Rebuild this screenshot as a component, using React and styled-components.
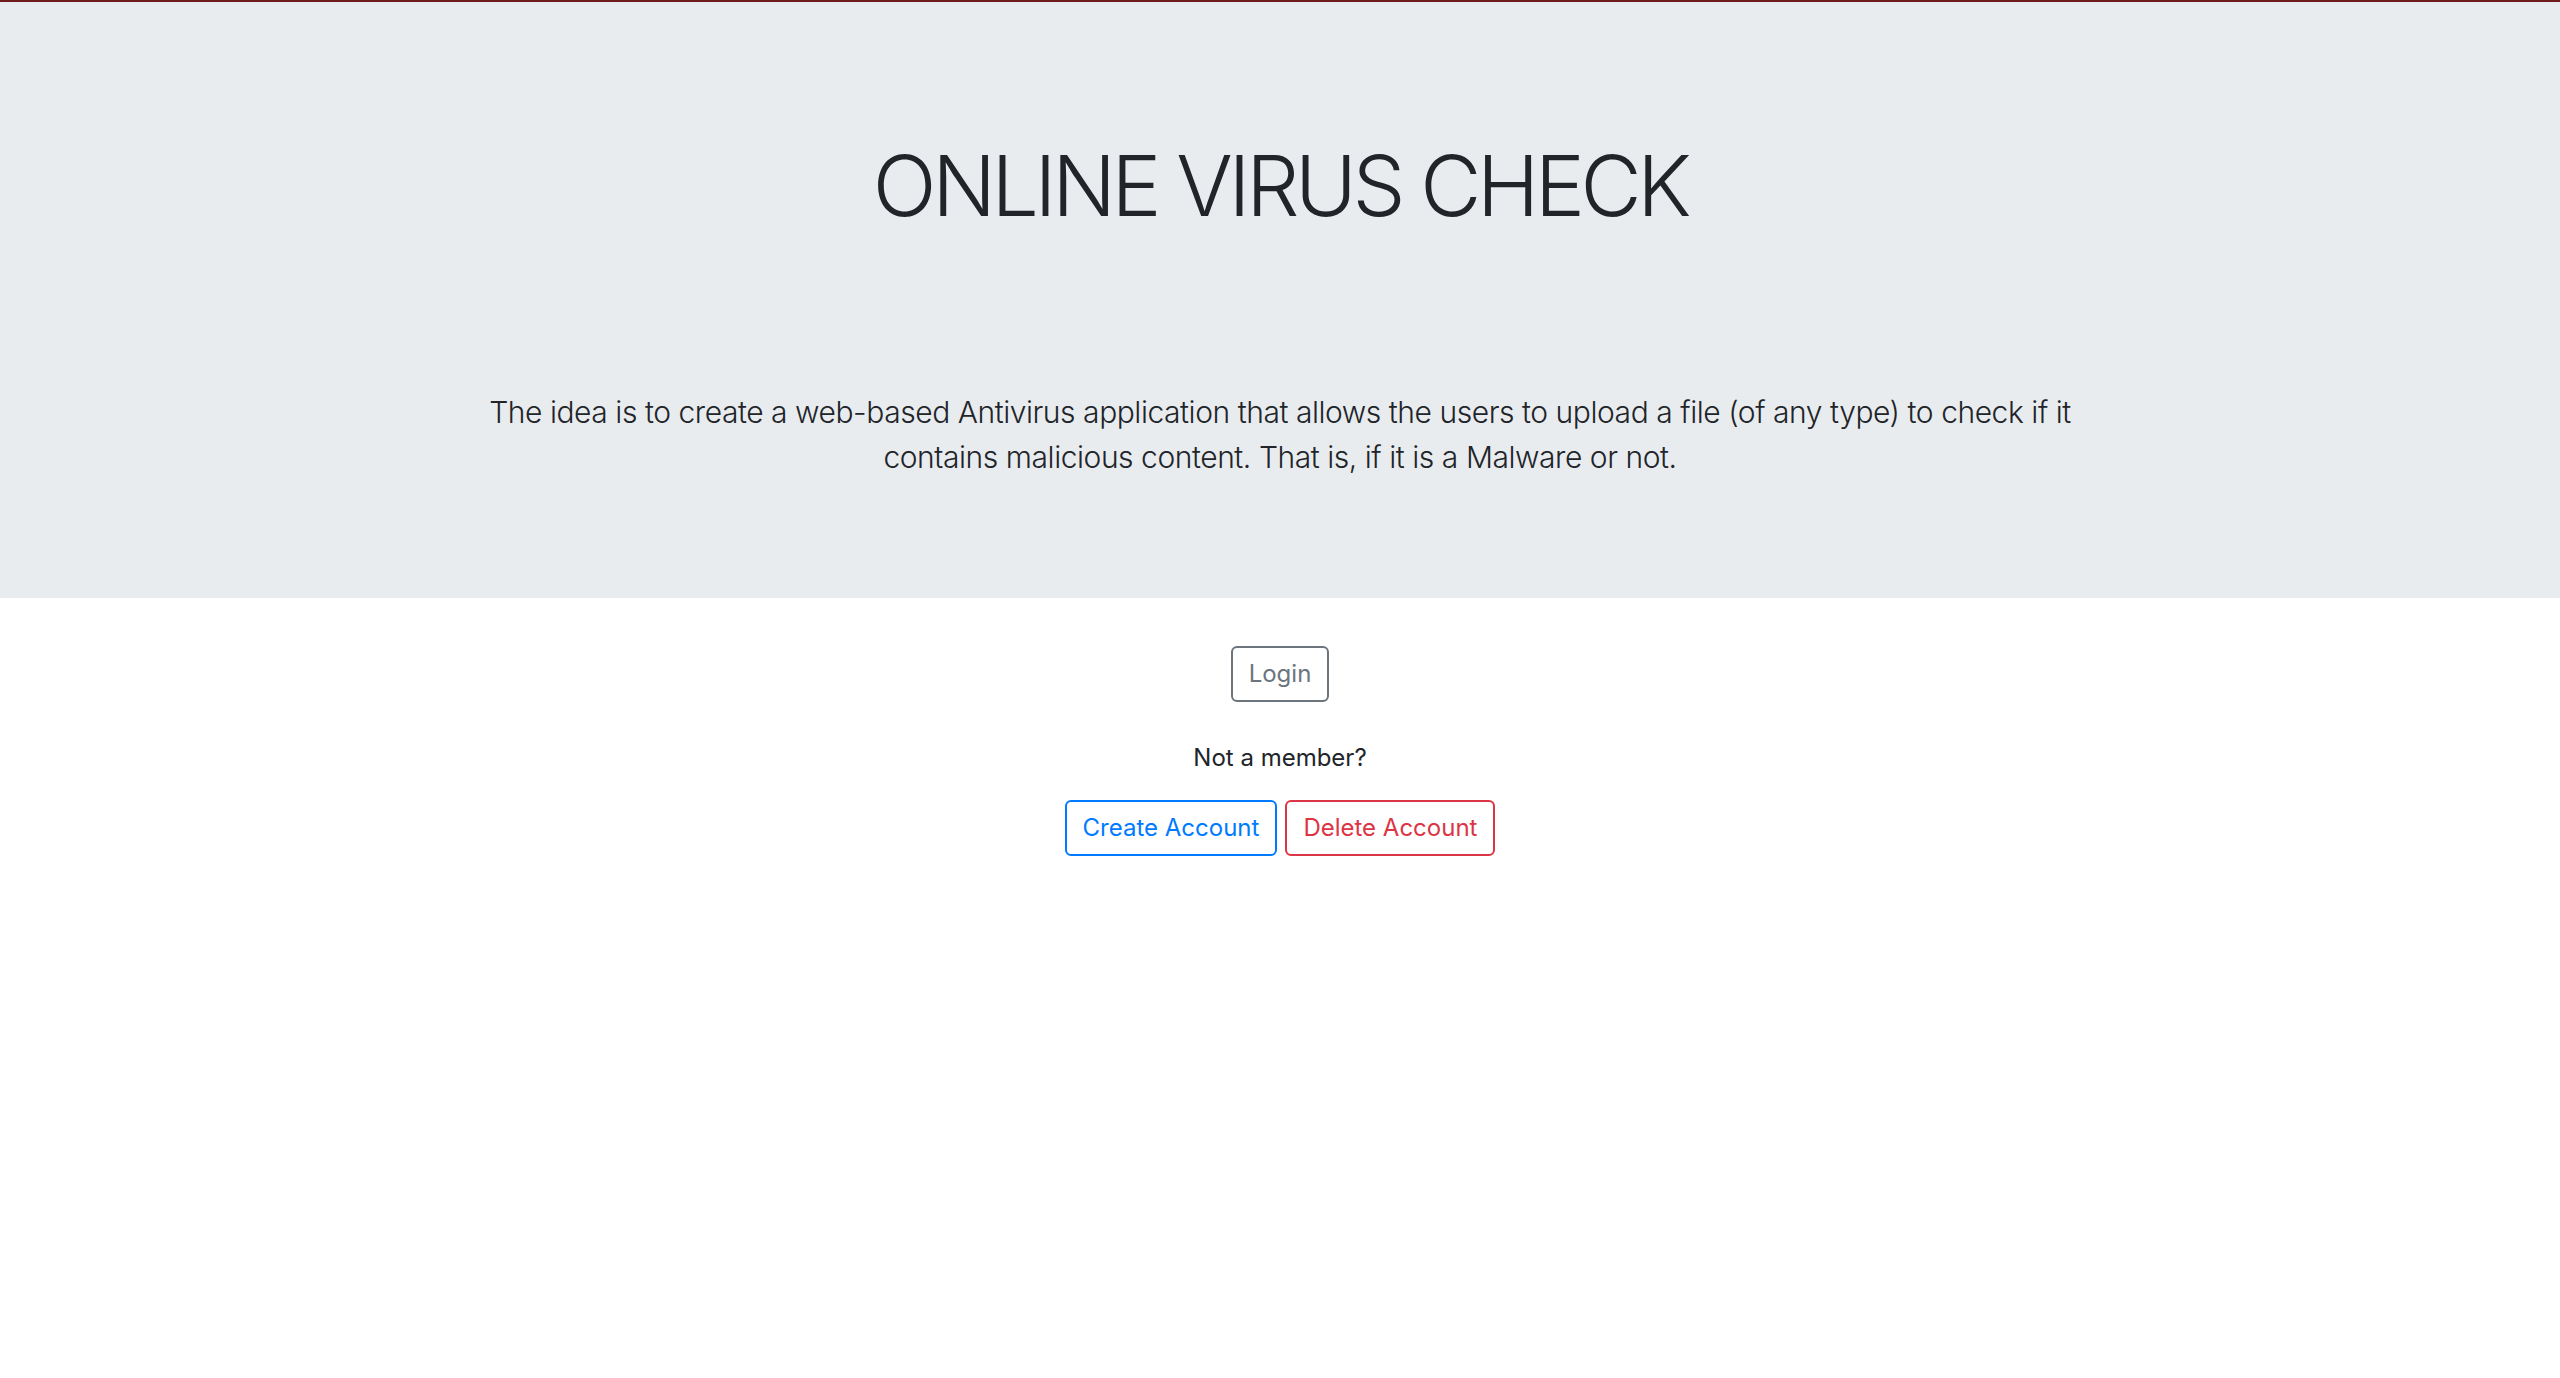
import React from 'react';
import styled, { createGlobalStyle } from 'styled-components';

const GlobalStyle = createGlobalStyle`
  html, body {
    margin: 0;
    padding: 0;
    background: #ffffff;
  }

  body {
    font-family: Inter, "Noto Sans", "Liberation Sans", sans-serif;
    color: #212529;
    border-top: 2px solid #6e1b1b;
  }
`;

const Jumbotron = styled.header`
  background: #e9ecef;
  padding: 134px 24px 118px;
  display: flex;
  flex-direction: column;
  align-items: center;
  text-align: center;
`;

const Title = styled.h1`
  margin: 0;
  font-size: 84px;
  font-weight: 300;
  line-height: 1.2;
  letter-spacing: -4.4px;
  color: #212529;
`;

const Lead = styled.p`
  margin: 153px 0 0;
  max-width: 1665px;
  font-size: 30px;
  font-weight: 300;
  line-height: 1.5;
  letter-spacing: -0.45px;
`;

const Main = styled.main`
  display: flex;
  flex-direction: column;
  align-items: center;
  padding-top: 48px;
`;

const Row = styled.div`
  display: flex;
  gap: 8px;
`;

const tones = {
  secondary: '#6c757d',
  primary: '#007bff',
  danger: '#dc3545',
};

const OutlineButton = styled.button`
  font-family: inherit;
  font-size: 24px;
  line-height: 36px;
  padding: 8px 16px;
  background: transparent;
  border: 2px solid ${props => tones[props.tone]};
  color: ${props => tones[props.tone]};
  border-radius: 6px;
  cursor: pointer;
`;

const Prompt = styled.p`
  margin: 38px 0 24px;
  font-size: 24px;
  line-height: 36px;
`;

export default function App() {
  return (
    <>
      <GlobalStyle />
      <Jumbotron>
        <Title>ONLINE VIRUS CHECK</Title>
        <Lead>
          The idea is to create a web-based Antivirus application that allows the users to upload a
          file (of any type) to check if it contains malicious content. That is, if it is a Malware
          or not.
        </Lead>
      </Jumbotron>
      <Main>
        <OutlineButton tone="secondary">Login</OutlineButton>
        <Prompt>Not a member?</Prompt>
        <Row>
          <OutlineButton tone="primary">Create Account</OutlineButton>
          <OutlineButton tone="danger">Delete Account</OutlineButton>
        </Row>
      </Main>
    </>
  );
}
